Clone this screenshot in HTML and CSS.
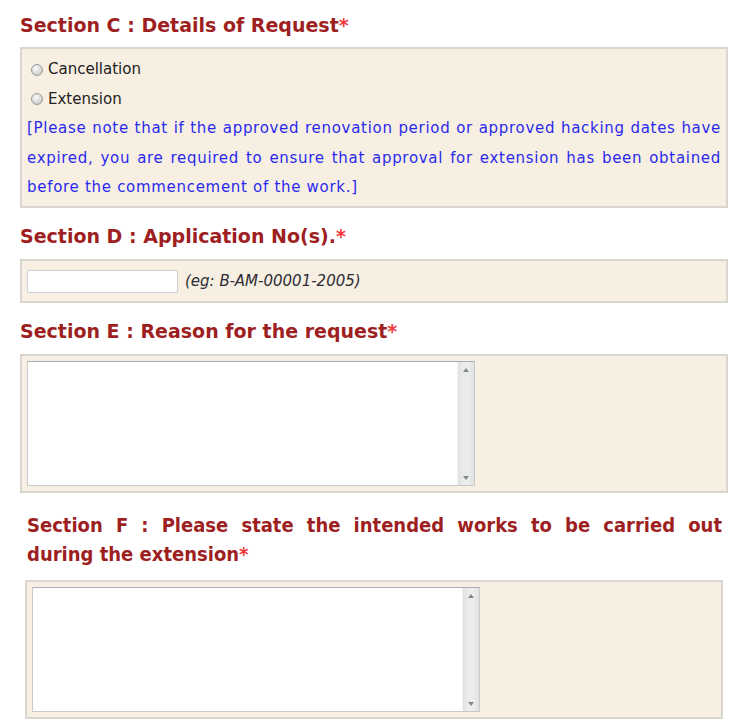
FILE: index.html
```html
<!DOCTYPE html>
<html lang="en">
<head>
    <meta charset="UTF-8">
    <meta name="viewport" content="width=device-width, initial-scale=1.0">
    <title>Request for Cancellation / Extension</title>
    <link rel="stylesheet" href="styles.css">
</head>
<body>
    <div class="form">
        <h2 class="section-title first">Section C : Details of Request<span class="req">*</span></h2>
        <div class="panel panel-options">
            <label class="option"><input type="radio" name="request" value="cancel">Cancellation</label>
            <label class="option"><input type="radio" name="request" value="extend">Extension</label>
            <p class="note">
                <span class="full">[Please note that if the approved renovation period or approved hacking dates have</span>
                <span class="full">expired, you are required to ensure that approval for extension has been obtained</span>
                <span>before the commencement of the work.]</span>
            </p>
        </div>

        <h2 class="section-title">Section D : Application No(s).<span class="req">*</span></h2>
        <div class="panel panel-inline">
            <input type="text" class="app-no" name="appno">
            <span class="hint">(eg: B-AM-00001-2005)</span>
        </div>

        <h2 class="section-title">Section E : Reason for the request<span class="req">*</span></h2>
        <div class="panel">
            <div class="textbox">
                <textarea name="reason"></textarea>
                <div class="scrollbar"><span class="arrow up"></span><span class="arrow down"></span></div>
            </div>
        </div>

        <div class="inset">
            <h2 class="section-title narrow">
                <span class="full">Section F : Please state the intended works to be carried out</span>
                <span>during the extension<span class="req">*</span></span>
            </h2>
            <div class="panel">
                <div class="textbox">
                    <textarea name="works"></textarea>
                    <div class="scrollbar"><span class="arrow up"></span><span class="arrow down"></span></div>
                </div>
            </div>
        </div>
    </div>
</body>
</html>
```

FILE: styles.css
```css
body {
    margin: 0;
    padding: 0;
    background-color: #fff;
    font-family: "DejaVu Sans", Verdana, sans-serif;
    font-size: 15px;
    color: #222;
}

.form {
    width: 708px;
    margin-left: 20px;
}

.section-title {
    font-size: 19px;
    line-height: 24px;
    font-weight: bold;
    color: #9e1f1f;
    margin: 16px 0 11px;
}

.section-title.first {
    margin-top: 13px;
    margin-bottom: 10px;
}

.section-title .req {
    color: #f03a3a;
}

.section-title.narrow {
    font-stretch: condensed;
    font-size: 20px;
    line-height: 29.5px;
    margin: 18px 0 10px;
    padding: 0 1px 0 2px;
}

.section-title.narrow > span {
    display: block;
}

.full {
    text-align: justify;
    text-align-last: justify;
}

.panel {
    background-color: #f7efe1;
    border: 2px solid #d9d6d0;
    padding: 5px;
}

.panel-options {
    padding: 6px 5px 3px;
}

.option {
    display: flex;
    align-items: center;
    line-height: 29.5px;
}

.option input[type="radio"] {
    appearance: none;
    width: 12px;
    height: 12px;
    margin: 0 5px 0 4px;
    border: 1px solid #9a9a9a;
    border-radius: 50%;
    background: radial-gradient(circle at 40% 35%, #fbfbfb, #cfcfcf 70%, #bdbdbd);
}

.note {
    margin: 0;
    color: #2a2aee;
    line-height: 29.5px;
    letter-spacing: 0.7px;
}

.note span {
    display: block;
}

.panel-inline {
    display: flex;
    align-items: center;
    padding: 8px 5px 7px;
    height: 25px;
}

.app-no {
    width: 151px;
    height: 23px;
    box-sizing: border-box;
    border: 1px solid #c9cfd4;
    border-radius: 2px;
    background-color: #fff;
    margin: 1px 0 0;
}

.hint {
    font-style: italic;
    font-size: 15px;
    color: #2c2c36;
    margin-left: 7px;
}

.textbox {
    display: flex;
    width: 448px;
    height: 125px;
    box-sizing: border-box;
    border: 1px solid #c7cbce;
    border-top-color: #a9aeb2;
    background-color: #fff;
}

.textbox textarea {
    flex: 1;
    margin: 0;
    border: 0;
    resize: none;
    overflow: hidden;
    outline: none;
}

.scrollbar {
    width: 17px;
    display: flex;
    flex-direction: column;
    align-items: center;
    justify-content: space-between;
    padding: 6px 0 5px;
    box-sizing: border-box;
    border-left: 1px solid #f2f2f2;
    background: linear-gradient(to right, #e1e1e1, #ececec 35%, #ececec 65%, #e1e1e1);
}

.arrow {
    width: 0;
    height: 0;
    border-left: 3px solid transparent;
    border-right: 3px solid transparent;
}

.arrow.up {
    border-bottom: 4px solid #7f8c88;
}

.arrow.down {
    border-top: 4px solid #7f8c88;
}

.inset {
    margin: 0 5px;
}
```
